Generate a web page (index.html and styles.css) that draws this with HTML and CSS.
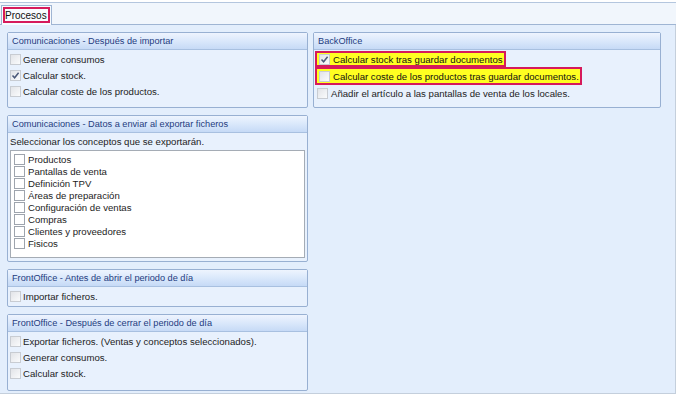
FILE: index.html
```html
<!DOCTYPE html>
<html lang="es">
<head>
<meta charset="utf-8">
<link rel="stylesheet" href="styles.css">
</head>
<body>
<div class="window">
  <div class="tabstrip">
    <div class="tab"><span class="tab-label">Procesos</span></div>
  </div>
  <div class="content">
    <div class="col">
      <section class="panel p1">
        <header class="panel-head">Comunicaciones - Después de importar</header>
        <div class="panel-body rows">
          <label class="row"><span class="cb"></span>Generar consumos</label>
          <label class="row"><span class="cb checked"><svg viewBox="0 0 9 9"><path d="M1.5 4.5 L3.6 6.8 L7.6 1.8" /></svg></span>Calcular stock.</label>
          <label class="row"><span class="cb"></span>Calcular coste de los productos.</label>
        </div>
      </section>
      <section class="panel p3">
        <header class="panel-head">Comunicaciones - Datos a enviar al exportar ficheros</header>
        <div class="panel-body">
          <div class="hint">Seleccionar los conceptos que se exportarán.</div>
          <div class="listbox">
            <div class="li"><span class="cb white"></span>Productos</div>
            <div class="li"><span class="cb white"></span>Pantallas de venta</div>
            <div class="li"><span class="cb white"></span>Definición TPV</div>
            <div class="li"><span class="cb white"></span>Áreas de preparación</div>
            <div class="li"><span class="cb white"></span>Configuración de ventas</div>
            <div class="li"><span class="cb white"></span>Compras</div>
            <div class="li"><span class="cb white"></span>Clientes y proveedores</div>
            <div class="li"><span class="cb white"></span>Fisicos</div>
          </div>
        </div>
      </section>
      <section class="panel p4">
        <header class="panel-head">FrontOffice - Antes de abrir el periodo de día</header>
        <div class="panel-body rows">
          <label class="row"><span class="cb"></span>Importar ficheros.</label>
        </div>
      </section>
      <section class="panel p5">
        <header class="panel-head">FrontOffice - Después de cerrar el periodo de día</header>
        <div class="panel-body rows">
          <label class="row"><span class="cb"></span>Exportar ficheros. (Ventas y conceptos seleccionados).</label>
          <label class="row"><span class="cb"></span>Generar consumos.</label>
          <label class="row"><span class="cb"></span>Calcular stock.</label>
        </div>
      </section>
    </div>
    <div class="col">
      <section class="panel p2">
        <header class="panel-head">BackOffice</header>
        <div class="panel-body rows bo">
          <label class="row mark m1"><span class="cb checked"><svg viewBox="0 0 9 9"><path d="M1.5 4.5 L3.6 6.8 L7.6 1.8" /></svg></span>Calcular stock tras guardar documentos</label>
          <label class="row mark m2"><span class="cb"></span>Calcular coste de los productos tras guardar documentos.</label>
          <label class="row"><span class="cb"></span>Añadir el artículo a las pantallas de venta de los locales.</label>
        </div>
      </section>
    </div>
  </div>
</div>
</body>
</html>
```
FILE: styles.css
```css
html, body {
  margin: 0;
  padding: 0;
}
body {
  width: 676px;
  height: 394px;
  overflow: hidden;
  background: #ffffff;
  font-family: "Liberation Sans", Arial, sans-serif;
  font-size: 9.6px;
  color: #1c1c1c;
}
.window {
  width: 676px;
  height: 394px;
  display: flex;
  flex-direction: column;
  box-sizing: border-box;
  padding-top: 2px;
}
.tabstrip {
  height: 21px;
  flex: none;
  border-top: 1px solid #b4c6de;
  border-bottom: 1px solid #9fb5d3;
  background: #f1f6fc;
  display: flex;
  align-items: flex-end;
  padding-left: 1px;
}
.tab {
  height: 20px;
  box-sizing: border-box;
  margin-bottom: -1px;
  border: 1px solid #9fb5d3;
  border-bottom: none;
  background: #f8fbfe;
  padding: 1px 1px 0 1px;
  display: flex;
}
.tab-label {
  border: 2px solid #d61a5b;
  height: 16px;
  line-height: 14px;
  box-sizing: border-box;
  padding: 0 1px 0 0;
  color: #101010;
  font-size: 10px;
}
.content {
  flex: 1;
  background: #e3eefc;
  border-right: 1px solid #c4cfdc;
  border-bottom: 1px solid #c4cfdc;
  display: grid;
  grid-template-columns: 301px 348px;
  column-gap: 5px;
  align-items: start;
  padding: 7px 0 0 7px;
}
.col {
  display: flex;
  flex-direction: column;
  gap: 7px;
}
.panel {
  border: 1px solid #98b0d2;
  border-radius: 2px;
  background: #e8f1fd;
  box-sizing: border-box;
}
.panel-head {
  height: 16px;
  line-height: 16px;
  padding-left: 4px;
  font-size: 9.2px;
  color: #1f3c80;
  background: linear-gradient(#eef4fe 0%, #dae8fb 50%, #c6daf6 100%);
  border-bottom: 1px solid #a8c0e0;
  white-space: nowrap;
}
.panel-body {
  padding: 1px 1px 0 2px;
}
.rows {
  display: flex;
  flex-direction: column;
  align-items: flex-start;
}
.row {
  height: 16px;
  display: flex;
  align-items: center;
  gap: 2px;
  padding-left: 0;
  white-space: nowrap;
}
.cb {
  width: 11px;
  height: 11px;
  box-sizing: border-box;
  border: 1px solid #c8ccd2;
  background: linear-gradient(135deg, #e2e4e8, #fafbfc);
  flex: none;
  display: inline-flex;
  align-items: center;
  justify-content: center;
}
.cb svg {
  width: 9px;
  height: 9px;
}
.cb svg path {
  fill: none;
  stroke: #4a5878;
  stroke-width: 1.5;
}
.cb.white {
  border: 1px solid #9ea4ad;
  background: #ffffff;
}
.p1 { height: 76px; }
.p2 { height: 76px; }
.p3 { height: 147px; }
.p4 { height: 38px; }
.p5 { height: 77px; }
.bo { padding-left: 1px; }
.bo .row { gap: 3px; padding-left: 2px; }
.bo .mark {
  background: #ffff21;
  border: 2px solid #d61a5b;
  box-sizing: border-box;
  padding-left: 2px;
  padding-right: 1px;
  color: #111;
}
.m1 { height: 16px; }
.m2 { height: 18px; }
.hint {
  height: 16px;
  line-height: 16px;
  padding-left: 0;
}
.listbox {
  background: #ffffff;
  border: 1px solid #a5acb5;
  height: 108px;
  box-sizing: border-box;
  padding: 2px 0 0 3px;
  margin-right: 1px;
}
.li {
  height: 12px;
  display: flex;
  align-items: center;
  gap: 3px;
  white-space: nowrap;
}
```
